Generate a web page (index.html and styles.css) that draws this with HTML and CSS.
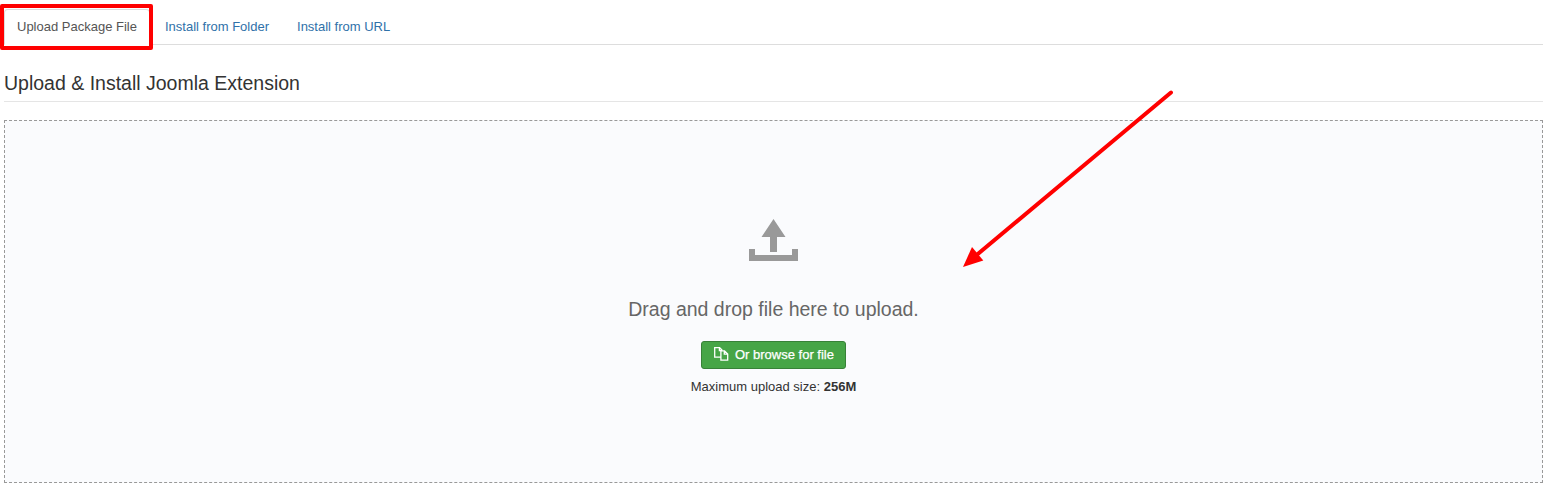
FILE: index.html
```html
<!DOCTYPE html>
<html lang="en">
<head>
<meta charset="utf-8">
<title>Install Extensions</title>
<link rel="stylesheet" href="styles.css">
</head>
<body>
<main class="page">
  <nav class="tabs">
    <a class="tab tab-active">Upload Package File</a>
    <a class="tab">Install from Folder</a>
    <a class="tab">Install from URL</a>
  </nav>
  <h1 class="legend">Upload &amp; Install Joomla Extension</h1>
  <section class="dropzone">
    <svg class="upload-icon" width="49" height="43" viewBox="0 0 49 43">
      <path d="M24.5 0 36.5 18H28v15h-7V18H12.5zM0 30h6v6h37v-6h6v12H0z"/>
    </svg>
    <p class="lead">Drag and drop file here to upload.</p>
    <button class="browse" type="button">
      <svg class="copy-icon" width="15" height="14" viewBox="0 0 15 14">
        <path d="M6.5 10.2H.7V.7h4.9l2.6 2.6M5.4.7v3h2.8M6.9 3.8h3.6l3.2 3.2v6.2H6.9zM10.3 3.8v3.4h3.4"/>
      </svg>
      <span>Or browse for file</span>
    </button>
    <p class="limit">Maximum upload size: <strong>256M</strong></p>
  </section>
</main>
<div class="highlight"></div>
<svg class="arrow" width="1549" height="490" viewBox="0 0 1549 490">
  <path class="arrow-line" d="M1171 92.5 976 255.5"/>
  <path class="arrow-head" d="M963 267 972 247 983.3 260.5z"/>
</svg>
</body>
</html>
```
FILE: styles.css
```css
* { box-sizing: border-box; }
body {
  margin: 0;
  height: 490px;
  overflow: hidden;
  background: #fff;
  color: #333;
  font: 13px/18px "Liberation Sans", Arial, sans-serif;
}
.page { padding: 9px 6px 0 4px; }
.tabs {
  display: flex;
  gap: 2px;
  height: 36px;
  border-bottom: 1px solid #ddd;
}
.tab {
  height: 36px;
  padding: 8px 12px;
  border: 1px solid transparent;
  border-radius: 4px 4px 0 0;
  color: #3071a9;
}
.tab-active {
  border-color: #ddd;
  border-bottom-color: #fff;
  background: #fff;
  color: #555;
}
.legend {
  margin: 20px 0 18px;
  height: 37px;
  border-bottom: 1px solid #e5e5e5;
  font-size: 19.5px;
  font-weight: 400;
  line-height: 36px;
}
.dropzone {
  display: flex;
  flex-direction: column;
  align-items: center;
  height: 363px;
  padding-top: 98px;
  border: 1px dashed #999;
  background: #fafbfd;
}
.upload-icon { fill: #999; }
.lead {
  margin: 33px 0 18px;
  color: #666;
  font-size: 19.5px;
  line-height: 28px;
}
.browse {
  display: flex;
  align-items: center;
  gap: 6px;
  width: 145px;
  height: 28px;
  padding: 0 12px;
  border: 1px solid #378137;
  border-radius: 3px;
  background: #46a546;
  color: #fff;
  font: 13px/18px "Liberation Sans", Arial, sans-serif;
  -webkit-text-stroke: 0.25px #fff;
  white-space: nowrap;
}
.copy-icon {
  flex: none;
  margin-top: -2px;
  fill: none;
  stroke: #fff;
  stroke-width: 1.3;
}
.limit { margin: 9px 0 0; }
.highlight {
  position: absolute;
  left: 0;
  top: 4px;
  width: 153px;
  height: 46px;
  border: 4px solid #f00;
  border-radius: 2px;
}
.arrow {
  position: absolute;
  left: 0;
  top: 0;
  pointer-events: none;
}
.arrow-line { stroke: #f00; stroke-width: 4; stroke-linecap: round; }
.arrow-head { fill: #f00; }
```
